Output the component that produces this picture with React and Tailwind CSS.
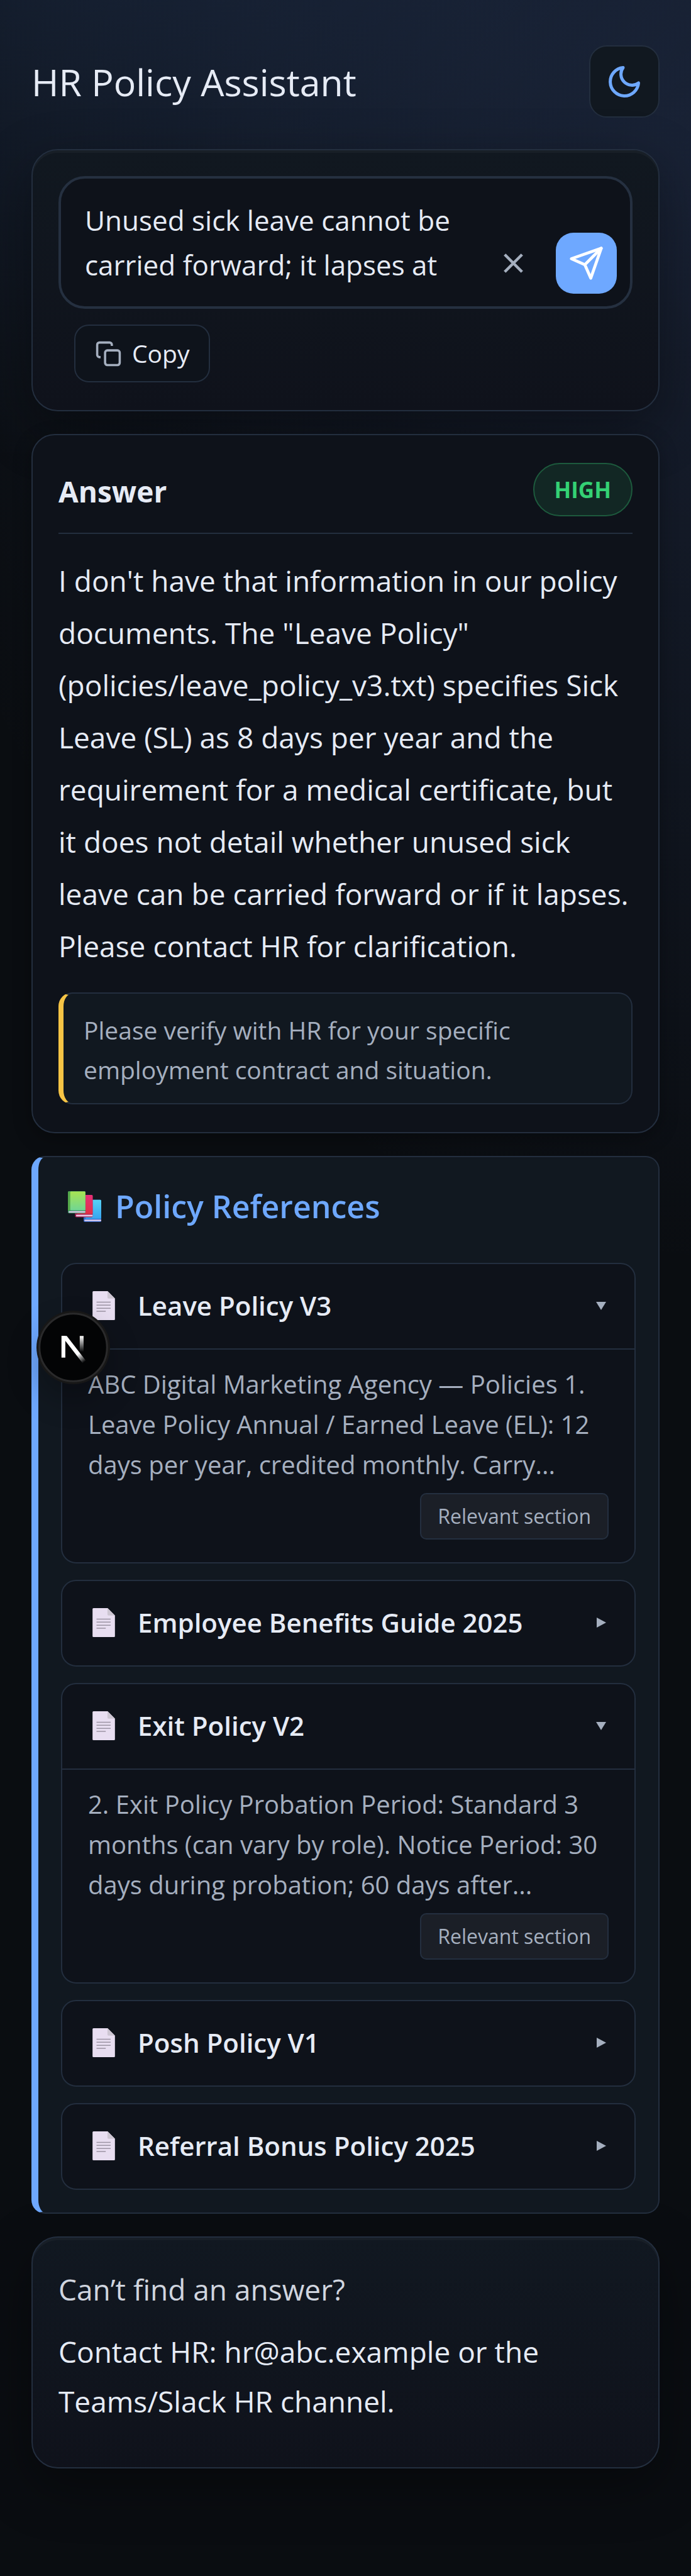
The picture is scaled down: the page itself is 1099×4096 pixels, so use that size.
import { useState } from "react";

const REFERENCES = [
  {
    title: "Leave Policy V3",
    snippet:
      "ABC Digital Marketing Agency — Policies 1. Leave Policy Annual / Earned Leave (EL): 12 days per year, credited monthly. Carry...",
    open: true,
  },
  { title: "Employee Benefits Guide 2025", snippet: "", open: false },
  {
    title: "Exit Policy V2",
    snippet:
      "2. Exit Policy Probation Period: Standard 3 months (can vary by role). Notice Period: 30 days during probation; 60 days after...",
    open: true,
  },
  { title: "Posh Policy V1", snippet: "", open: false },
  { title: "Referral Bonus Policy 2025", snippet: "", open: false },
];

function MoonIcon() {
  return (
    <svg viewBox="0 0 24 24" className="size-[60px]" fill="none" stroke="currentColor" strokeWidth="2" strokeLinecap="round" strokeLinejoin="round" aria-hidden="true">
      <path d="M21 12.79A9 9 0 1 1 11.21 3 7 7 0 0 0 21 12.79z" />
    </svg>
  );
}

function CloseIcon() {
  return (
    <svg viewBox="0 0 24 24" className="size-[55px]" fill="none" stroke="currentColor" strokeWidth="2" aria-hidden="true">
      <path d="M18 6 6 18M6 6l12 12" />
    </svg>
  );
}

function SendIcon() {
  return (
    <svg viewBox="0 0 24 24" className="size-[57px]" fill="none" stroke="currentColor" strokeWidth="2" strokeLinecap="round" strokeLinejoin="round" aria-hidden="true">
      <path d="M22 2 11 13" />
      <path d="m22 2-7 20-4-9-9-4Z" />
    </svg>
  );
}

function CopyIcon() {
  return (
    <svg viewBox="0 0 24 24" className="size-[43px] text-[#a5afbf]" fill="none" stroke="currentColor" strokeWidth="2" aria-hidden="true">
      <rect x="9" y="9" width="13" height="13" rx="2" />
      <path d="M5 15H4a2 2 0 0 1-2-2V4a2 2 0 0 1 2-2h9a2 2 0 0 1 2 2v1" />
    </svg>
  );
}

function BooksIcon() {
  return (
    <svg viewBox="0 0 210 194" className="h-[49px] w-[53px] shrink-0" aria-hidden="true">
      <defs>
        <linearGradient id="book-green" x1="0" y1="0" x2="0" y2="1">
          <stop offset="0" stopColor="#a8e352" />
          <stop offset="1" stopColor="#70d694" />
        </linearGradient>
        <linearGradient id="book-red" x1="0" y1="0" x2="0" y2="1">
          <stop offset="0" stopColor="#e52f78" />
          <stop offset="1" stopColor="#e23045" />
        </linearGradient>
        <linearGradient id="book-blue" x1="0" y1="0" x2="0" y2="1">
          <stop offset="0" stopColor="#57d3f5" />
          <stop offset="1" stopColor="#36a4f0" />
        </linearGradient>
      </defs>
      <rect x="99" y="54" width="111" height="140" rx="7" fill="#3566c4" />
      <rect x="110" y="54" width="100" height="120" rx="6" fill="url(#book-blue)" />
      <rect x="104" y="179" width="106" height="10" rx="4" fill="#dccdf0" />
      <rect x="45" y="24" width="111" height="140" rx="7" fill="#a31c50" />
      <rect x="58" y="24" width="98" height="120" rx="6" fill="url(#book-red)" />
      <rect x="51" y="149" width="105" height="10" rx="4" fill="#ecc6e4" />
      <rect x="0" y="0" width="111" height="140" rx="7" fill="#3c8f62" />
      <rect x="0" y="2" width="16" height="120" rx="5" fill="#54a84a" />
      <rect x="15" y="2" width="95" height="119" rx="5" fill="url(#book-green)" />
      <rect x="5" y="126" width="105" height="10" rx="4" fill="#d8cbe8" />
    </svg>
  );
}

function PageIcon() {
  return (
    <svg viewBox="0 0 141 182" className="ml-[7px] h-[46px] w-9 shrink-0" aria-hidden="true">
      <path d="M6 0H95L141 46V176a6 6 0 0 1-6 6H6a6 6 0 0 1-6-6V6a6 6 0 0 1 6-6Z" fill="#e8def1" />
      <path d="M94 0 141 46H100a6 6 0 0 1-6-6Z" fill="#cdc6d2" />
      <path d="M25 69H114M25 88H114M25 108H114M25 127H83" stroke="#9c94a4" strokeWidth="6" />
    </svg>
  );
}

function Caret({ open }) {
  return (
    <svg viewBox="0 0 16 16" className="mr-1 size-4 shrink-0 text-[#a5afbf]" fill="currentColor" aria-hidden="true">
      {open ? <path d="M0 2H16L8 15Z" /> : <path d="M1 0V16L16 8Z" />}
    </svg>
  );
}

function DevBadge() {
  return (
    <button type="button" aria-label="Open developer tools" className="absolute top-[244px] -left-[3px] rounded-full shadow-[0_24px_48px_rgba(0,0,0,0.25)]">
      <svg viewBox="0 0 459 459" className="block size-[117px]" aria-hidden="true">
        <defs>
          <linearGradient id="n-diagonal" gradientUnits="userSpaceOnUse" x1="262" y1="268" x2="300" y2="320">
            <stop offset="0" stopColor="#fff" />
            <stop offset="1" stopColor="#fff" stopOpacity="0" />
          </linearGradient>
          <linearGradient id="n-stem" gradientUnits="userSpaceOnUse" x1="282" y1="158" x2="282" y2="258">
            <stop offset="0" stopColor="#fff" />
            <stop offset="1" stopColor="#fff" stopOpacity="0" />
          </linearGradient>
        </defs>
        <circle cx="229.5" cy="229.5" r="229.5" fill="#171717" />
        <circle cx="229.5" cy="229.5" r="211" fill="#030405" stroke="#2a2a2b" strokeWidth="12" />
        <path d="M156 158H180V293H156Z" fill="#fff" />
        <path d="M156 158H189L308 312 288 328 174 180Z" fill="url(#n-diagonal)" />
        <path d="M270 158H294V258H270Z" fill="url(#n-stem)" />
      </svg>
    </button>
  );
}

function ReferenceItem({ id, title, snippet, open, onToggle }) {
  return (
    <li className="rounded-[24px] border-2 border-[#232e3e] bg-[#0e121a]">
      <button type="button" aria-expanded={open} aria-controls={id} onClick={onToggle} className="flex w-full items-center gap-9 px-[41px] pt-[38px] pb-10 text-left">
        <PageIcon />
        <span className="flex-1 text-[42px] leading-[56px] font-semibold">{title}</span>
        <Caret open={open} />
      </button>
      {open && snippet && (
        <div id={id} className="border-t-2 border-[#232e3e] px-[41px] pt-[23px] pb-9">
          <p className="text-[40px] leading-[64px] text-[#a5afbf]">{snippet}</p>
          <div className="mt-[13px] flex justify-end">
            <button type="button" className="rounded-[10px] border-2 border-[#242f3f] bg-[#1b1f27] px-[26px] py-[13px] text-[32px] leading-[44px] text-[#a5afbf]">
              Relevant section
            </button>
          </div>
        </div>
      )}
    </li>
  );
}

export default function App() {
  const [question, setQuestion] = useState("Unused sick leave cannot be carried forward; it lapses at");
  const [openItems, setOpenItems] = useState(REFERENCES.map((r) => r.open));
  const toggle = (index) => setOpenItems((items) => items.map((v, i) => (i === index ? !v : v)));

  return (
    <div className="min-h-screen overflow-hidden bg-[#0a0d11] bg-[radial-gradient(1400px_1700px_at_110%_8%,rgba(110,150,255,0.13),transparent),radial-gradient(1700px_900px_at_10%_-4%,rgba(90,150,255,0.13),transparent)] bg-no-repeat px-[50px] pt-[72px] pb-40 font-['Open_Sans','Noto_Sans',sans-serif] text-[#e6ebf5]">
      <header className="flex items-center justify-between">
        <h1 className="text-[59px] leading-[80px]">HR Policy Assistant</h1>
        <button type="button" aria-label="Toggle theme" className="flex h-[115px] w-28 items-center justify-center rounded-[28px] border-2 border-[#232e3e] bg-[#111820] text-[#6ea8ff]">
          <MoonIcon />
        </button>
      </header>

      <main className="mt-[50px] flex flex-col gap-9">
        <form onSubmit={(e) => e.preventDefault()} className="rounded-[42px] border-2 border-[#232e3e] bg-linear-to-b from-[#111820] to-[#0f121b] px-[41px] pt-[41px] pb-11 shadow-[0_28px_84px_rgba(0,0,0,0.35),inset_0_4px_0_rgba(255,255,255,0.03)]">
          <div className="flex items-end gap-[19px] rounded-[42px] border-4 border-[#253040] bg-[#0e121a] pt-[31px] pr-[21px] pb-5 pl-[38px]">
            <textarea
              aria-label="Your question"
              rows={2}
              value={question}
              onChange={(e) => setQuestion(e.target.value)}
              className="mb-[10px] block min-w-0 flex-1 resize-none overflow-hidden bg-transparent text-[44px] leading-[71px] outline-none"
            />
            <button type="button" aria-label="Clear" onClick={() => setQuestion("")} className="flex size-[97px] items-center justify-center text-[#a5afbf]">
              <CloseIcon />
            </button>
            <button type="submit" aria-label="Send" className="flex size-[97px] items-center justify-center rounded-[28px] bg-[#6ea8ff] text-white">
              <SendIcon />
            </button>
          </div>
          <button type="button" className="mt-[25px] ml-[25px] flex items-center gap-4 rounded-[23px] border-2 border-[#232e3e] bg-[#0e131b] px-[31px] py-[18px] text-[39px] leading-[52px]">
            <CopyIcon />
            Copy
          </button>
        </form>

        <section className="rounded-[37px] border-2 border-[#232e3e] bg-[#0e121a] px-[41px] py-11 shadow-[0_8px_30px_rgba(0,0,0,0.3)]">
          <div className="flex items-center justify-between border-b-2 border-[#232e3e] pb-[26px]">
            <h2 className="pt-1 text-[46px] leading-[60px] font-bold">Answer</h2>
            <span className="rounded-full border-2 border-[#1d5a3d] bg-[#122724] px-8 py-4 text-[35px] leading-[49px] font-bold text-[#34d174]">HIGH</span>
          </div>
          <p className="mt-[33px] text-[46px] leading-[83px]">
            I don't have that information in our policy documents. The "Leave Policy" (policies/leave_policy_v3.txt) specifies Sick Leave (SL) as 8 days per year and the requirement for a medical certificate, but it does not detail whether unused sick leave can be carried forward or if it lapses. Please contact HR for clarification.
          </p>
          <p className="mt-8 rounded-[22px] border-2 border-l-8 border-[#232e3e] border-l-[#f6c445] bg-[#111820] px-8 pt-[26px] pb-[22px] text-[39px] leading-[63px] text-[#a5afbf]">
            Please verify with HR for your specific
            <br />
            employment contract and situation.
          </p>
        </section>

        <section className="relative rounded-[22px] border-2 border-l-[11px] border-[#232e3e] border-l-[#6ea8ff] bg-[#111820] px-9 pt-11 pb-9">
          <h2 className="mb-14 flex items-center gap-[22px] pl-[11px] text-[50px] leading-[68px] font-semibold text-[#6ea8ff]">
            <BooksIcon />
            Policy References
          </h2>
          <ul className="flex flex-col gap-[26px]">
            {REFERENCES.map((item, i) => (
              <ReferenceItem key={item.title} id={`reference-${i}`} title={item.title} snippet={item.snippet} open={openItems[i]} onToggle={() => toggle(i)} />
            ))}
          </ul>
          <DevBadge />
        </section>

        <footer className="rounded-[42px] border-2 border-[#232e3e] bg-linear-to-b from-[#111821] to-[#0f121b] px-[41px] pt-[43px] pb-[65px] text-[46px] leading-[79px] shadow-[0_28px_84px_rgba(0,0,0,0.35),inset_0_4px_0_rgba(255,255,255,0.03)]">
          <p className="text-[#d0d5df]">Can’t find an answer?</p>
          <p className="mt-5">
            Contact HR: hr@abc.example or the
            <br />
            Teams/Slack HR channel.
          </p>
        </footer>
      </main>
    </div>
  );
}
